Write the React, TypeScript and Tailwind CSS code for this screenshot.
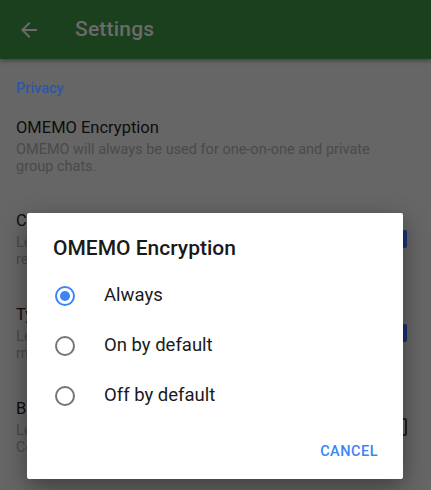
import React from "react";

const font = { fontFamily: "Roboto, 'Noto Sans', sans-serif" };

type Pref = { title: string; summary: string; checked: boolean };

const PREFS: Pref[] = [
  {
    title: "Confirm Messages",
    summary: "Let your contacts know when you have received and read their messages",
    checked: true,
  },
  {
    title: "Typing notifications",
    summary: "Let your contacts know when you are writing messages to them",
    checked: true,
  },
  {
    title: "Broadcast last user interaction",
    summary: "Let all your contacts know when you use Conversations",
    checked: false,
  },
];

const OPTIONS = ["Always", "On by default", "Off by default"];

function Checkbox({ checked }: { checked: boolean }) {
  return (
    <div
      className={
        checked
          ? "w-[18px] h-[18px] rounded-[2px] bg-[#1c3170] shrink-0"
          : "w-[18px] h-[18px] rounded-[2px] border-2 border-[#1f1f1f] shrink-0"
      }
    />
  );
}

function Radio({ checked }: { checked: boolean }) {
  return (
    <div
      className={
        checked
          ? "w-5 h-5 rounded-full border-2 border-[#3d85f5] flex items-center justify-center"
          : "w-5 h-5 rounded-full border-2 border-[#757575]"
      }
    >
      {checked && <div className="w-[10px] h-[10px] rounded-full bg-[#3d85f5]" />}
    </div>
  );
}

export default function App() {
  return (
    <div className="relative w-[431px] h-[490px] overflow-hidden bg-[#666666]" style={font}>
      {/* app bar (dimmed by the dialog scrim) */}
      <div className="h-[59px] bg-[#1b401d] flex items-center shadow-[0_2px_4px_rgba(0,0,0,0.35)] relative z-10">
        <svg className="ml-[17px] w-6 h-6" viewBox="0 0 24 24" fill="#6b6b6b">
          <path d="M20 11H7.83l5.59-5.59L12 4l-8 8 8 8 1.41-1.41L7.83 13H20v-2z" />
        </svg>
        <span className="ml-[34px] text-[21px] font-medium text-[#6b6b6b] tracking-[0.2px]">Settings</span>
      </div>

      <div className="px-4">
        <div className="pt-[19px] text-[14.5px] font-medium text-[#2c57a6]">Privacy</div>

        <div className="pt-[18px]">
          <div className="text-[16.5px] text-[#0d0d0d] leading-[20px]">OMEMO Encryption</div>
          <div className="text-[14.5px] text-[#4a4a4a] leading-[17px] mt-[3px] pr-8">
            OMEMO will always be used for one-on-one and private group chats.
          </div>
        </div>

        <div className="mt-[36px] flex flex-col gap-[37px]">
          {PREFS.map((p) => (
            <div key={p.title} className="flex items-center">
              <div className="flex-1">
                <div className="text-[16.5px] text-[#0d0d0d] leading-[20px] whitespace-nowrap">{p.title}</div>
                <div className="w-[305px] text-[14.5px] text-[#4a4a4a] leading-[17px] mt-[3px]">{p.summary}</div>
              </div>
              <div className="mr-[8px]">
                <Checkbox checked={p.checked} />
              </div>
            </div>
          ))}
        </div>
      </div>

      {/* dialog */}
      <div className="absolute left-[27px] top-[213px] w-[376px] h-[266px] bg-white rounded-[2px] shadow-[0_8px_24px_rgba(0,0,0,0.4)] z-20 flex flex-col">
        <div className="pl-[26px] pt-[22px] text-[21px] font-medium text-[#1a1a1a] leading-[26px]">
          OMEMO Encryption
        </div>
        <div className="mt-[10px] flex flex-col">
          {OPTIONS.map((o, i) => (
            <div key={o} className="h-[50px] flex items-center pl-[28px]">
              <Radio checked={i === 0} />
              <span className="ml-[29px] text-[18.5px] text-[#1a1a1a]">{o}</span>
            </div>
          ))}
        </div>
        <div className="flex justify-end pr-[25px] mt-[20px]">
          <span className="text-[14.5px] font-medium text-[#3d85f5] tracking-[0.5px]">CANCEL</span>
        </div>
      </div>
    </div>
  );
}
